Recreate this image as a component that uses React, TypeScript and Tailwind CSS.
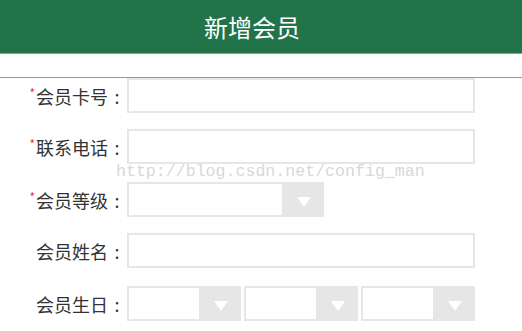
import React from "react";

const font = { fontFamily: '"Microsoft YaHei", "Noto Sans CJK SC", "Noto Sans", sans-serif' };

const Label = ({ text, required }: { text: string; required?: boolean }) => (
  <div className="w-[127px] shrink-0 flex items-center justify-end text-[18px] text-[#333] leading-none">
    {required && <span className="text-[#e4393c] text-[12px] self-start mt-[9px] mr-[1px]">*</span>}
    <span>{text}</span>
    <span className="w-[18px] text-center mr-[1px]">:</span>
  </div>
);

const Select = ({ width }: { width: string }) => (
  <div className={`${width} h-[35px] border-2 border-[#e6e6e6] flex bg-white`}>
    <div className="flex-1" />
    <div className="w-[40px] bg-[#e6e6e6] flex items-center justify-center pt-[5px] pl-[4px]">
      <div className="w-0 h-0 border-l-[7px] border-r-[7px] border-t-[10px] border-l-transparent border-r-transparent border-t-white" />
    </div>
  </div>
);

const App = () => {
  return (
    <div className="w-[522px] h-[331px] bg-white overflow-hidden relative" style={font}>
      <div className="h-[54px] bg-[#21744a] border-b border-[#7a9cd8] flex items-center justify-center pr-[18px]">
        <h1 className="text-white text-[24px] leading-none">新增会员</h1>
      </div>
      <div className="h-[24px] border-b border-[#7a9cd8]" />

      <form className="flex flex-col">
        <div className="flex">
          <Label text="会员卡号" required />
          <input className="w-[348px] h-[35px] border-2 border-[#e6e6e6] outline-none" />
        </div>
        <div className="flex mt-[16px]">
          <Label text="联系电话" required />
          <input className="w-[348px] h-[35px] border-2 border-[#e6e6e6] outline-none" />
        </div>
        <div className="flex mt-[18px]">
          <Label text="会员等级" required />
          <Select width="w-[197px]" />
        </div>
        <div className="flex mt-[16px]">
          <Label text="会员姓名" />
          <input className="w-[348px] h-[35px] border-2 border-[#e6e6e6] outline-none" />
        </div>
        <div className="flex mt-[18px]">
          <Label text="会员生日" />
          <div className="flex gap-[3px]">
            <Select width="w-[114px]" />
            <Select width="w-[114px]" />
            <Select width="w-[114px]" />
          </div>
        </div>
      </form>

      <div
        className="absolute left-[116px] top-[164px] text-[16.6px] text-[#d8d8d8] leading-none pointer-events-none"
        style={{ fontFamily: '"Liberation Mono", monospace' }}
      >
        http://blog.csdn.net/config_man
      </div>
    </div>
  );
};

export default App;
